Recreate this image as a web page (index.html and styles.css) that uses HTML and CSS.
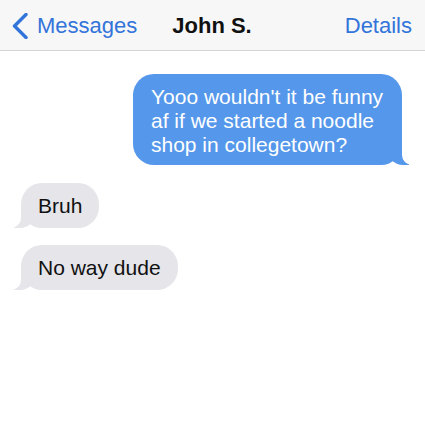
FILE: index.html
```html
<!DOCTYPE html>
<html>
<head>
<meta charset="utf-8">
<link rel="stylesheet" href="styles.css">
</head>
<body>
<header class="nav">
  <a class="nav-back">
    <svg class="chev" width="16" height="26" viewBox="0 0 16 26"><path d="M14 1.5 L2.5 13 L14 24.5" fill="none" stroke="currentColor" stroke-width="3.4" stroke-linecap="round" stroke-linejoin="round"/></svg>
    <span>Messages</span>
  </a>
  <div class="nav-title">John S.</div>
  <a class="nav-details">Details</a>
</header>
<main class="thread">
  <div class="bubble sent">Yooo wouldn't it be funny af if we started a noodle shop in collegetown?</div>
  <div class="bubble recv first">Bruh</div>
  <div class="bubble recv">No way dude</div>
</main>
</body>
</html>
```
FILE: styles.css
```css
* { box-sizing: border-box; }
html, body { margin: 0; padding: 0; background: #ffffff; }
body {
  font-family: "Liberation Sans", Arial, sans-serif;
  width: 425px;
  height: 428px;
  overflow: hidden;
}
.nav {
  height: 51px;
  background: #f7f7f8;
  border-bottom: 1px solid #d4d4d6;
  display: grid;
  grid-template-columns: 1fr auto 1fr;
  align-items: center;
  font-size: 22px;
  padding: 2px 13px 0 12px;
}
.nav-back {
  display: flex;
  align-items: center;
  gap: 9px;
  color: #3274d9;
  justify-self: start;
}
.chev { display: block; margin-top: -1px; }
.nav-title {
  font-weight: bold;
  color: #111;
}
.nav-details {
  justify-self: end;
  color: #3274d9;
}
.thread {
  display: flex;
  flex-direction: column;
  padding: 23px 0 0 0;
}
.bubble {
  position: relative;
  font-size: 21px;
  line-height: 24px;
  border-radius: 21px;
}
.sent {
  align-self: flex-end;
  width: 269px;
  margin-right: 23px;
  background: #5597ea;
  color: #ffffff;
  padding: 11px 12px 8px 18px;
}
.sent::before {
  content: "";
  position: absolute;
  bottom: 0;
  right: -7px;
  width: 22px;
  height: 20px;
  background: #5597ea;
  border-bottom-left-radius: 16px;
  z-index: 0;
}
.sent::after {
  content: "";
  position: absolute;
  bottom: 0;
  right: -12px;
  width: 12px;
  height: 20px;
  background: #ffffff;
  border-bottom-left-radius: 10px;
  z-index: 1;
}
.recv {
  align-self: flex-start;
  margin-left: 21px;
  background: #e5e5ea;
  color: #111;
  padding: 11px 17px 10px 17px;
}
.recv.first { margin-top: 18px; }
.recv + .recv { margin-top: 17px; }
.recv::before {
  content: "";
  position: absolute;
  bottom: 0;
  left: -7px;
  width: 22px;
  height: 20px;
  background: #e5e5ea;
  border-bottom-right-radius: 16px;
  z-index: 0;
}
.recv::after {
  content: "";
  position: absolute;
  bottom: 0;
  left: -12px;
  width: 12px;
  height: 20px;
  background: #ffffff;
  border-bottom-right-radius: 10px;
  z-index: 1;
}
```
